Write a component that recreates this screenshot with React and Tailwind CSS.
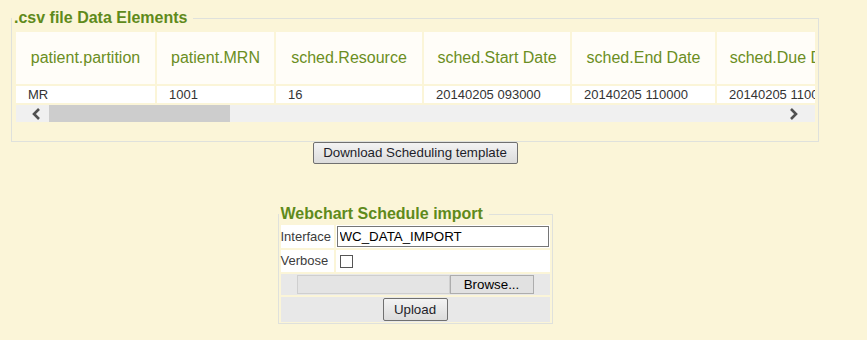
import React from "react";

const columns = [
    { name: "patient.partition", width: "w-[139px]", value: "MR" },
    { name: "patient.MRN", width: "w-[117px]", value: "1001" },
    { name: "sched.Resource", width: "w-[146px]", value: "16" },
    { name: "sched.Start Date", width: "w-[146px]", value: "20140205 093000" },
    { name: "sched.End Date", width: "w-[143px]", value: "20140205 110000" },
    { name: "sched.Due Date", width: "w-[140px]", value: "20140205 110000" },
];

function Chevron({ dir }) {
    const points = dir === "left" ? "7,1 2,6 7,11" : "2,1 7,6 2,11";
    return (
        <svg width="9" height="12" viewBox="0 0 9 12">
            <polyline points={points} fill="none" stroke="#505050" strokeWidth="2.6" />
        </svg>
    );
}

export default function App() {
    return (
        <div className="min-h-screen bg-[#fbf5d8] font-['Liberation_Sans',Arial,sans-serif]">
            <div className="w-[808px] ml-[11px] pt-[9px] flex flex-col items-center">
                {/* Data elements */}
                <fieldset className="w-[808px] border border-[#dfe1dc] p-0 m-0">
                    <legend className="pl-[2px] pr-[6px] text-[16px] leading-[18px] font-bold text-[#5f8a1b]">
                        .csv file Data Elements
                    </legend>
                    <div className="pt-[5px] pl-[4px] pb-[19px]">
                        <div className="w-[799px] overflow-hidden flex flex-col gap-[2px]">
                            <div className="flex gap-[2px] h-[52px]">
                                {columns.map((col) => (
                                    <div
                                        key={col.name}
                                        className={`${col.width} shrink-0 bg-[#fffdf8] flex items-center justify-center text-[16px] text-[#6b8e23] whitespace-nowrap`}
                                    >
                                        {col.name}
                                    </div>
                                ))}
                            </div>
                            <div className="flex gap-[2px] h-[17px]">
                                {columns.map((col) => (
                                    <div
                                        key={col.name}
                                        className={`${col.width} shrink-0 bg-white flex items-center pl-[12px] text-[13px] text-[#333] whitespace-nowrap overflow-hidden`}
                                    >
                                        {col.value}
                                    </div>
                                ))}
                            </div>
                            <div className="flex h-[17px] bg-[#f0f0f0]">
                                <div className="w-[33px] pl-[8px] flex items-center justify-center">
                                    <Chevron dir="left" />
                                </div>
                                <div className="w-[181px] bg-[#cdcdcd]"></div>
                                <div className="flex-1"></div>
                                <div className="w-[33px] pr-[11px] flex items-center justify-center">
                                    <Chevron dir="right" />
                                </div>
                            </div>
                        </div>
                    </div>
                </fieldset>

                <button className="h-[22px] w-[205px] border border-[#707070] rounded-[2px] bg-gradient-to-b from-[#f3f3f3] to-[#dcdcdc] text-[13.33px] text-[#1e1e2a]">
                    Download Scheduling template
                </button>

                {/* Import form */}
                <fieldset className="mt-[41px] w-[275px] border border-[#dfe1dc] p-0 m-0">
                    <legend className="pl-[2px] pr-[6px] text-[16px] leading-[18px] font-bold text-[#5f8a1b]">
                        Webchart Schedule import
                    </legend>
                    <div className="pt-[2px] pl-[2px] pr-[2px] pb-[1px] flex flex-col gap-[2px]">
                        <div className="flex gap-[2px] h-[23px]">
                            <div className="w-[53px] bg-white flex items-center text-[13px] text-[#3c3c3c]">
                                Interface
                            </div>
                            <div className="flex-1 bg-white flex items-center">
                                <input
                                    type="text"
                                    defaultValue="WC_DATA_IMPORT"
                                    className="ml-[1px] w-[212px] h-[21px] border border-[#767676] px-[2px] text-[13.33px] text-black outline-none"
                                />
                            </div>
                        </div>
                        <div className="flex gap-[2px] h-[22px]">
                            <div className="w-[53px] bg-white flex items-center text-[13px] text-[#3c3c3c]">
                                Verbose
                            </div>
                            <div className="flex-1 bg-white flex items-center pl-[4px]">
                                <input
                                    type="checkbox"
                                    className="appearance-none w-[13px] h-[13px] border border-[#555] bg-white m-0"
                                />
                            </div>
                        </div>
                        <div className="h-[21px] bg-[#e8e8e8] flex items-center justify-center">
                            <div className="w-[153px] h-[19px] bg-[#e4e4e4] border border-[#cfcfcf]"></div>
                            <button className="w-[84px] h-[19px] border border-[#adadad] bg-[#e1e1e1] text-[13.33px] text-black leading-none">
                                Browse...
                            </button>
                        </div>
                        <div className="h-[25px] bg-[#e8e8e8] flex items-center justify-center">
                            <button className="w-[65px] h-[23px] border border-[#707070] rounded-[2px] bg-gradient-to-b from-[#f3f3f3] to-[#dcdcdc] text-[13.33px] text-[#1e1e2a]">
                                Upload
                            </button>
                        </div>
                    </div>
                </fieldset>
            </div>
        </div>
    );
}
